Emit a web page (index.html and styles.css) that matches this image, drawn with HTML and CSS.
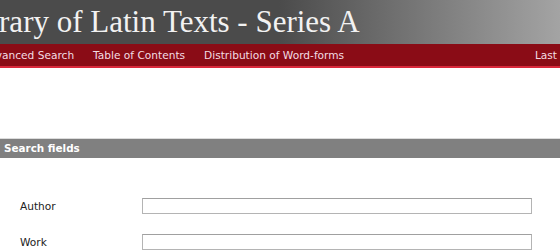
FILE: index.html
```html
<!DOCTYPE html>
<html lang="en">

<head>
  <meta charset="UTF-8" />
  <title>Library of Latin Texts - Series A</title>
  <link rel="stylesheet" href="styles.css">
</head>

<body>
  <div class="pagina">

    <div class="cabecalho">
      <h1>Library of Latin Texts - Series A</h1>
    </div>

    <div class="menu">
      <div class="menu-esq">
        <a href="#">Advanced Search</a>
        <a href="#">Table of Contents</a>
        <a href="#">Distribution of Word-forms</a>
      </div>
      <a href="#" class="menu-dir">Last</a>
    </div>

    <div class="conteudo">
      <div class="secao-titulo">Search fields</div>

      <div class="campos">
        <div class="campo">
          <label>Author</label>
          <input type="text" />
        </div>
        <div class="campo">
          <label>Work</label>
          <input type="text" />
        </div>
      </div>
    </div>

  </div>
</body>

</html>
```

FILE: styles.css
```css
body {
  margin: 0;
  padding: 0;
  background: #fff;
  font-family: "DejaVu Sans", Verdana, sans-serif;
  overflow: hidden;
}

.pagina {
  margin-left: -41px;
  width: 640px;
}

.cabecalho {
  height: 44px;
  background: linear-gradient(to right, #4b4b4b 0%, #4b4b4b 50%, #b0b0b0 100%);
  overflow: hidden;
}

.cabecalho h1 {
  margin: 0;
  padding: 4px 0 0 0;
  margin-left: -3px;
  font-family: "Liberation Serif", serif;
  font-weight: normal;
  font-size: 31px;
  color: #f2f2f2;
  white-space: nowrap;
}

.menu {
  display: flex;
  justify-content: space-between;
  align-items: center;
  height: 22px;
  background: #8a0c16;
  border-bottom: 2px solid #d9283b;
}

.menu a {
  color: #f3dde3;
  text-decoration: none;
  font-size: 10.6px;
}

.menu-esq {
  display: flex;
  gap: 19px;
  padding-left: 23px;
}

.menu-dir {
  padding-right: 42px;
}

.conteudo {
  padding-top: 70px;
}

.secao-titulo {
  background: #808080;
  border-top: 1px solid #dcdcdc;
  color: #fff;
  font-weight: bold;
  font-size: 10.4px;
  padding: 3px 0 4px 45px;
}

.campos {
  padding: 40px 0 0 61px;
}

.campo {
  display: flex;
  align-items: center;
  margin-bottom: 20px;
}

.campo label {
  width: 122px;
  font-size: 10.6px;
  color: #222;
}

.campo input {
  width: 386px;
  height: 12px;
  border: 1px solid #b4b4b4;
  border-top-color: #a0a0a0;
  padding: 1px;
  margin: 0;
}
```
